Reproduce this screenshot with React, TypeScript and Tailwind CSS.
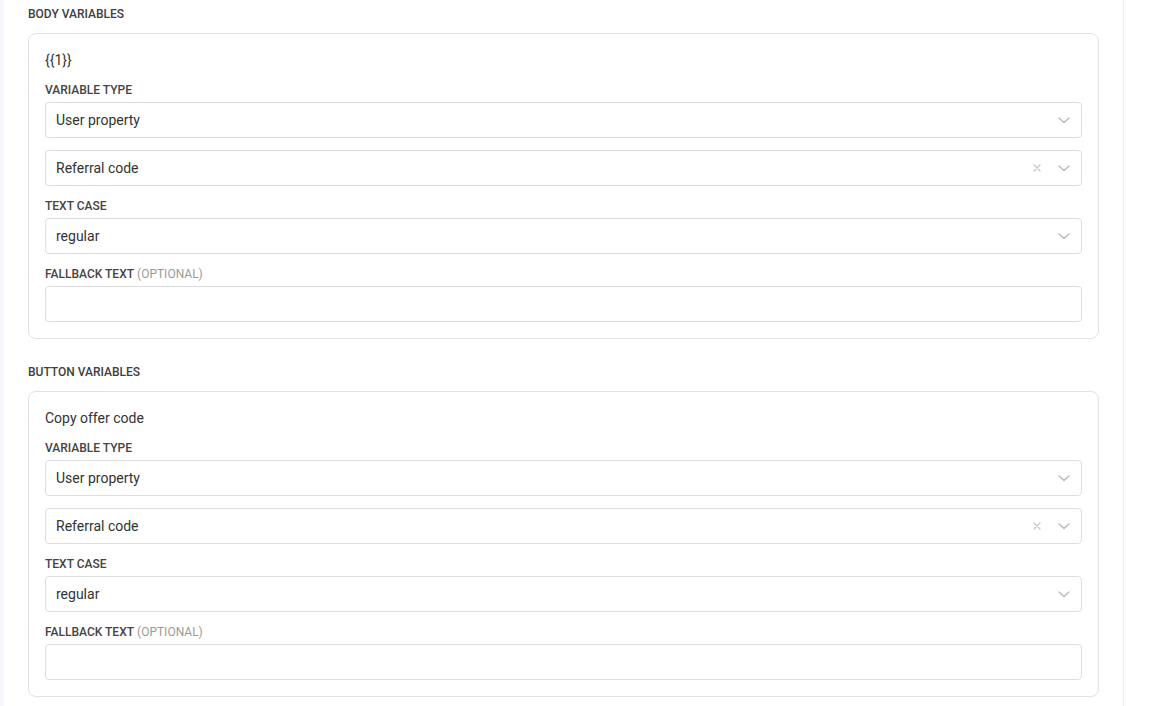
import React from "react";

const Chevron = () => (
  <svg width="12" height="7" viewBox="0 0 12 7" fill="none" className="shrink-0">
    <path d="M1 1l5 4.5L11 1" stroke="#bdbdbd" strokeWidth="1.6" strokeLinecap="round" strokeLinejoin="round" />
  </svg>
);

const Clear = () => (
  <svg width="8" height="8" viewBox="0 0 8 8" fill="none" className="shrink-0">
    <path d="M1 1l6 6M7 1L1 7" stroke="#c4c4c4" strokeWidth="1.2" strokeLinecap="round" />
  </svg>
);

const Label = ({ children, optional }: { children: React.ReactNode; optional?: boolean }) => (
  <div className="text-[12px] leading-[16px] font-medium text-[#444444] mb-[4px]">
    {children}
    {optional && <span className="font-normal text-[#9a9a9a]"> (OPTIONAL)</span>}
  </div>
);

const Select = ({ value, clearable }: { value: string; clearable?: boolean }) => (
  <div className="h-[36px] border border-[#dedede] rounded-[4px] flex items-center pl-[10px] pr-[11px] bg-white">
    <span className="flex-1 text-[14px] text-[#333333]">{value}</span>
    {clearable && (
      <span className="mr-[17px] flex items-center">
        <Clear />
      </span>
    )}
    <Chevron />
  </div>
);

const TextInput = () => <div className="h-[36px] border border-[#dedede] rounded-[4px] bg-white" />;

const VariableCard = ({ title }: { title: string }) => (
  <div className="border border-[#e2e2e2] rounded-[8px] px-[16px] pt-[16px] pb-[16px] bg-white">
    <div className="text-[14px] leading-[20px] text-[#333333] mb-[12px]">{title}</div>
    <Label>VARIABLE TYPE</Label>
    <Select value="User property" />
    <div className="mt-[12px]">
      <Select value="Referral code" clearable />
    </div>
    <div className="mt-[12px]">
      <Label>TEXT CASE</Label>
      <Select value="regular" />
    </div>
    <div className="mt-[12px]">
      <Label optional>FALLBACK TEXT</Label>
      <TextInput />
    </div>
  </div>
);

const SectionHeading = ({ children }: { children: React.ReactNode }) => (
  <div className="text-[12px] leading-[16px] font-medium text-[#404040] mb-[11px]">{children}</div>
);

export default function App() {
  return (
    <div
      className="h-[706px] w-[1152px] overflow-hidden flex bg-white"
      style={{ fontFamily: "Roboto, 'Liberation Sans', sans-serif" }}
    >
      <div className="w-[4px] shrink-0 bg-[#f4f6f9]" />
      <div className="flex-1 border-r border-[#ececec] pl-[24px] pr-[24px] pt-[6px]">
        <SectionHeading>BODY VARIABLES</SectionHeading>
        <VariableCard title="{{1}}" />
        <div className="mt-[25px]">
          <SectionHeading>BUTTON VARIABLES</SectionHeading>
          <VariableCard title="Copy offer code" />
        </div>
      </div>
      <div className="w-[28px] shrink-0 bg-white" />
    </div>
  );
}
